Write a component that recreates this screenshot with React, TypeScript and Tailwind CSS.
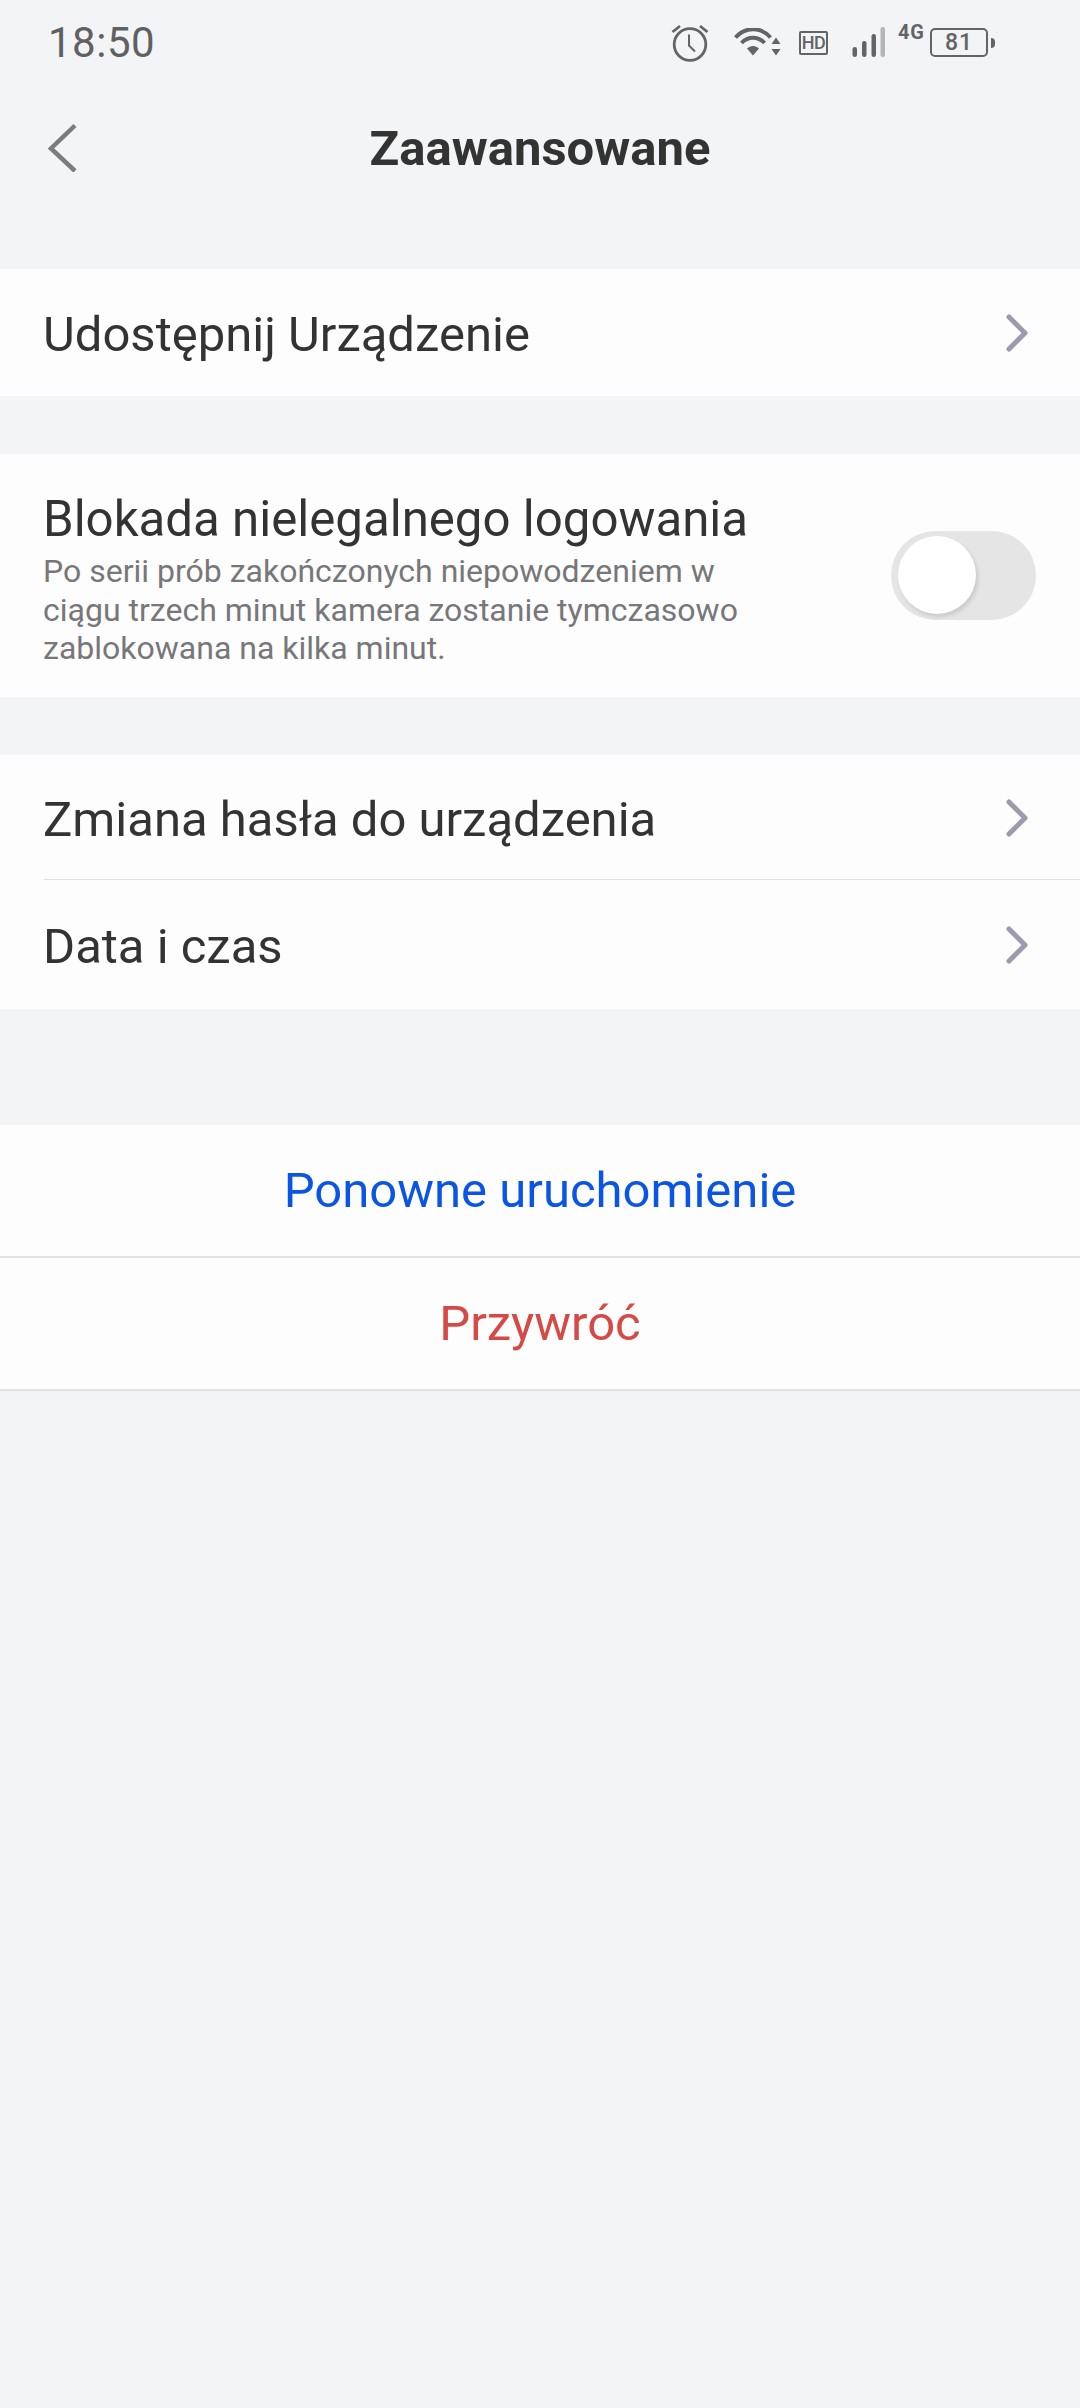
import { ChevronRight } from 'lucide-react';

function AlarmIcon() {
  return (
    <svg width="40" height="40" viewBox="0 0 40 40" fill="none" stroke="#636466" strokeWidth="2.800">
      <circle cx="20" cy="21.5" r="15.8" />
      <path d="M19 11.5v11l6 6" strokeWidth="2" />
      <path d="M2.500 9l7.500-6M37.500 9l-7.500-6" />
    </svg>
  );
}

function WifiIcon() {
  return (
    <svg width="47" height="28" viewBox="0 0 47 28" fill="none">
      <path d="M1.5 9.500C11 -1.500 27 -1.500 36.500 9.500" stroke="#636466" strokeWidth="4" />
      <path d="M7.500 15C14 8 24 8 30.500 15" stroke="#636466" strokeWidth="4" />
      <path d="M13 20.500C16.500 17 21.500 17 25 20.500L19 27.500Z" fill="#636466" />
      <path d="M42 9.500l4.500 6.500h-9zM42 27.500l4.500-6.500h-9z" fill="#636466" />
    </svg>
  );
}

function SignalIcon() {
  return (
    <svg width="33" height="30" viewBox="0 0 33 30">
      <rect x="0.500" y="20" width="4.500" height="10" rx="2.200" fill="#636466" />
      <rect x="10" y="14" width="4.500" height="16" rx="2.200" fill="#636466" />
      <rect x="19.500" y="7" width="4.500" height="23" rx="2.200" fill="#636466" />
      <rect x="28.500" y="0" width="4.500" height="30" rx="2.200" fill="#b4b5b6" />
    </svg>
  );
}

function StatusBar() {
  return (
    <div className="flex h-[86px] items-start justify-between pl-[48px] pr-[85px] text-[#636466]">
      <span className="mt-[23px] text-[42px] leading-[40px] tracking-[0.5px] text-[#5f6062]">18:50</span>
      <div className="mt-[23px] flex items-start">
        <AlarmIcon />
        <div className="ml-[24px] mt-[5px]">
          <WifiIcon />
        </div>
        <span className="ml-[18px] mt-[8px] flex h-[24px] w-[29px] items-center justify-center rounded-[2px] border-[2.500px] border-[#636466] text-[18px] font-medium leading-none tracking-[-0.5px]">
          HD
        </span>
        <div className="ml-[24px] mt-[4px]">
          <SignalIcon />
        </div>
        <span className="ml-[13px] mt-[1px] text-[20px] font-bold leading-[16px] tracking-[1px]">4G</span>
        <div className="ml-[5px] mt-[5px] flex items-center">
          <span className="flex h-[29px] w-[58px] items-center justify-center rounded-[5px] border-[2.500px] border-[#636466] text-[23px] font-medium leading-none tracking-[1px]">
            81
          </span>
          <span className="ml-[3px] h-[10px] w-[4px] rounded-r-[5px] bg-[#636466]" />
        </div>
      </div>
    </div>
  );
}

function NavRow({ label, className, divider = false }: { label: string; className: string; divider?: boolean }) {
  return (
    <div className={`relative flex items-center justify-between pl-[43px] pr-[31px] ${className}`}>
      <span className="mt-[4px] text-[49px] leading-none text-[#333333]">{label}</span>
      <ChevronRight size={64} strokeWidth={1.9} className="text-[#9c9bad]" />
      {divider && <div className="absolute bottom-0 left-[44px] right-0 h-px bg-[#e0e0e0]" />}
    </div>
  );
}

function LockToggle() {
  return (
    <div className="relative h-[89px] w-[145px] shrink-0 self-center rounded-full bg-[#e5e5e5]">
      <div className="absolute left-[7px] top-[5px] h-[78px] w-[78px] rounded-full bg-white shadow-[2px_3px_4px_rgba(0,0,0,0.12)]" />
    </div>
  );
}

export default function App() {
  return (
    <div className="min-h-[2408px] w-[1080px] bg-[#f3f4f6] font-['Roboto',sans-serif]">
      <StatusBar />

      <div className="relative flex h-[122px] items-center justify-center pt-[3px]">
        <svg className="absolute left-[46px] top-[36px]" width="34" height="50" viewBox="0 0 34 50" fill="none">
          <path d="M29 3.500L5 26.500L29 49" stroke="#7c7c7c" strokeWidth="4.500" />
        </svg>
        <h1 className="text-[49px] font-bold leading-none text-[#333333]">Zaawansowane</h1>
      </div>

      <div className="mt-[61px] bg-[#fdfdfd]">
        <NavRow label="Udostępnij Urządzenie" className="h-[127px]" />
      </div>

      <div className="mt-[58px] flex h-[243px] items-start justify-between bg-[#fdfdfd] pl-[43px] pr-[44px] pt-[38px]">
        <div className="w-[740px]">
          <div className="text-[49.200px] leading-[54px] text-[#333333]">Blokada nielegalnego logowania</div>
          <p className="mt-[6px] text-[32px] leading-[38.500px] text-[#77777a]">
            Po serii prób zakończonych niepowodzeniem w
            <br />
            ciągu trzech minut kamera zostanie tymczasowo
            <br />
            zablokowana na kilka minut.
          </p>
        </div>
        <div className="-mt-[38px] flex h-[243px]">
          <LockToggle />
        </div>
      </div>

      <div className="mt-[58px] bg-[#fdfdfd]">
        <NavRow label="Zmiana hasła do urządzenia" className="h-[125px]" divider />
        <NavRow label="Data i czas" className="h-[129px]" />
      </div>

      <div className="mt-[116px] bg-[#fdfdfd]">
        <button className="flex h-[133px] w-full items-center justify-center border-b-2 border-[#e2e2e2] text-[49px] leading-none text-[#0b55e6]">
          Ponowne uruchomienie
        </button>
        <button className="flex h-[133px] w-full items-center justify-center border-b-2 border-[#e2e2e2] text-[49px] leading-none text-[#d64a45]">
          Przywróć
        </button>
      </div>
    </div>
  );
}
